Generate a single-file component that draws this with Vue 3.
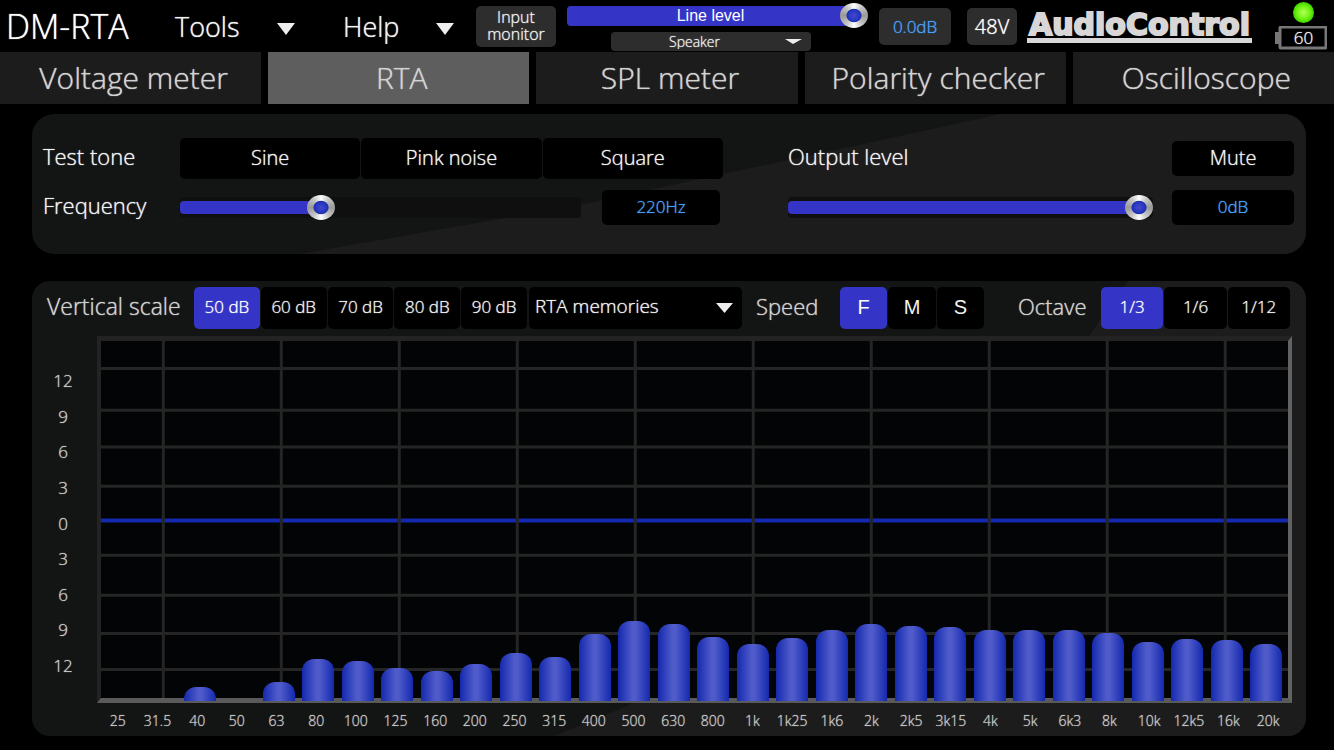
<script setup>
import { ref } from 'vue'

const tabs = ['Voltage meter', 'RTA', 'SPL meter', 'Polarity checker', 'Oscilloscope']
const activeTab = ref('RTA')

const tones = ['Sine', 'Pink noise', 'Square']
const tone = ref('')

const scales = ['50 dB', '60 dB', '70 dB', '80 dB', '90 dB']
const scale = ref('50 dB')
const speeds = ['F', 'M', 'S']
const speed = ref('F')
const octaves = ['1/3', '1/6', '1/12']
const octave = ref('1/3')

const lineLevel = ref(100)
const frequency = ref(34)
const outputLevel = ref(100)

const axis = [12, 9, 6, 3, 0, 3, 6, 9, 12]

// Grid positions as a share of the plot area
const rows = [7.7, 19.4, 29.7, 40.7, 60, 71.2, 81.9, 92]
const columns = Array.from({ length: 10 }, (_, i) => 5.25 + i * 9.94)

// [band, level] with level as a share of the plot height
const bands = [
  ['25', 0], ['31.5', 0], ['40', 3.8], ['50', 0], ['63', 5.4], ['80', 11.8],
  ['100', 11], ['125', 9.3], ['160', 8.2], ['200', 10.3], ['250', 13.4], ['315', 12.2],
  ['400', 18.6], ['500', 22.1], ['630', 21.5], ['800', 17.9], ['1k', 15.7], ['1k25', 17.4],
  ['1k6', 19.7], ['2k', 21.4], ['2k5', 20.9], ['3k15', 20.6], ['4k', 19.7], ['5k', 19.7],
  ['6k3', 19.7], ['8k', 19], ['10k', 16.5], ['12k5', 17.3], ['16k', 16.9], ['20k', 15.7]
]
</script>

<template>
  <div class="app">
    <header class="topbar">
      <h1 class="title">DM-RTA</h1>
      <button class="menu tools" type="button">
        Tools
        <svg width="18" height="14" viewBox="0 0 18 14"><path d="M0 1H18L9 13Z" /></svg>
      </button>
      <button class="menu help" type="button">
        Help
        <svg width="18" height="14" viewBox="0 0 18 14"><path d="M0 1H18L9 13Z" /></svg>
      </button>
      <button class="chip monitor" type="button">Input<br />monitor</button>
      <div class="line">
        <div class="line-slider">
          <input id="line" v-model="lineLevel" class="slider solid" type="range" :style="{ '--p': lineLevel / 100 }" />
          <label for="line">Line level</label>
        </div>
        <div class="picker speaker">
          <select aria-label="Source"><option>Speaker</option></select>
          <svg width="17" height="6" viewBox="0 0 17 6"><path d="M0 0H17L8 5Z" /></svg>
        </div>
      </div>
      <output class="chip gain">0.0dB</output>
      <button class="chip phantom" type="button">48V</button>
      <span class="logo">AudioControl</span>
      <div class="status">
        <span class="led"></span>
        <div class="battery">
          <svg width="52" height="24" viewBox="0 0 52 24">
            <path d="M0 6H5V18H0Z" fill="#777" />
            <rect x="5" y="1" width="46" height="21" rx="1" fill="#000" stroke="#777" stroke-width="3" />
          </svg>
          <span>60</span>
        </div>
      </div>
    </header>

    <nav class="tabs">
      <button v-for="t in tabs" :key="t" type="button" :class="{ on: t === activeTab }" @click="activeTab = t">{{ t }}</button>
    </nav>

    <section class="panel signal">
      <div class="block generator">
        <span class="label">Test tone</span>
        <div class="tones">
          <button v-for="t in tones" :key="t" class="key" type="button" :aria-pressed="t === tone" @click="tone = t">{{ t }}</button>
        </div>
        <label class="label" for="freq">Frequency</label>
        <div class="pair">
          <input id="freq" v-model="frequency" class="slider" type="range" :style="{ '--p': frequency / 100 }" />
          <output class="key value" for="freq">220Hz</output>
        </div>
      </div>
      <div class="block level">
        <label class="label" for="out">Output level</label>
        <button class="key" type="button">Mute</button>
        <input id="out" v-model="outputLevel" class="slider" type="range" :style="{ '--p': outputLevel / 100 }" />
        <output class="key value" for="out">0dB</output>
      </div>
    </section>

    <section class="panel analyser">
      <div class="toolbar">
        <span class="caption scale-caption">Vertical scale</span>
        <div class="group scales">
          <button v-for="s in scales" :key="s" class="key" :class="{ on: s === scale }" type="button" @click="scale = s">{{ s }}</button>
        </div>
        <div class="picker memories">
          <select aria-label="Memories"><option>RTA memories</option></select>
          <svg width="17" height="12" viewBox="0 0 17 12"><path d="M0 1H17L8.500 11Z" /></svg>
        </div>
        <span class="caption speed-caption">Speed</span>
        <div class="group speeds">
          <button v-for="s in speeds" :key="s" class="key" :class="{ on: s === speed }" type="button" @click="speed = s">{{ s }}</button>
        </div>
        <span class="caption octave-caption">Octave</span>
        <div class="group octaves">
          <button v-for="o in octaves" :key="o" class="key" :class="{ on: o === octave }" type="button" @click="octave = o">{{ o }}</button>
        </div>
      </div>

      <div class="chart">
        <div class="y-axis">
          <span v-for="(n, i) in axis" :key="i">{{ n }}</span>
        </div>
        <div class="plot">
          <svg class="grid" width="100%" height="100%">
            <line v-for="y in rows" :key="'r' + y" x1="0" x2="100%" :y1="y + '%'" :y2="y + '%'" />
            <line class="zero" x1="0" x2="100%" y1="50.3%" y2="50.3%" />
            <line v-for="x in columns" :key="'c' + x" :x1="x + '%'" :x2="x + '%'" y1="0" y2="100%" />
          </svg>
          <div class="bars">
            <div v-for="b in bands" :key="b[0]" class="slot">
              <div v-if="b[1]" class="bar" :style="{ height: b[1] + '%' }"></div>
            </div>
          </div>
        </div>
        <div class="x-axis">
          <span v-for="b in bands" :key="b[0]">{{ b[0] }}</span>
        </div>
      </div>
    </section>
  </div>
</template>

<style>
body {
  margin: 0;
  background: #000;
}
</style>

<style scoped>
.app {
  min-height: 100vh;
  box-sizing: border-box;
  display: flex;
  flex-direction: column;
  padding-bottom: 14px;
  background: #000;
  color: #f2f2f2;
  font-family: "Open Sans", "Noto Sans", sans-serif;
  font-weight: 300;
  text-shadow: 0 0 1px currentColor;
}
button,
select {
  margin: 0;
  padding: 0;
  border: 0;
  font: inherit;
  color: inherit;
  text-shadow: 0 0 1px currentColor;
  background: none;
  cursor: pointer;
}
svg {
  display: block;
  fill: #eee;
}

.topbar {
  height: 52px;
  display: flex;
  align-items: center;
  padding: 0 7px 0 6px;
  white-space: nowrap;
}
.title {
  margin: 0;
  width: 125px;
  font-size: 34px;
  font-weight: 300;
  color: #fff;
}
.menu {
  display: flex;
  align-items: center;
  justify-content: space-between;
  font-size: 27px;
  line-height: 40px;
  padding-top: 2px;
}
.menu svg {
  margin-top: 4px;
}
.tools {
  width: 120px;
  margin-left: 44px;
}
.help {
  width: 111px;
  margin-left: 48px;
}
.chip {
  display: flex;
  align-items: center;
  justify-content: center;
  border-radius: 5px;
  background: #2d2d2d;
}
.monitor {
  width: 80px;
  height: 41px;
  margin-left: 22px;
  font-size: 16px;
  line-height: 17px;
}
.line {
  flex: 1;
  min-width: 200px;
  height: 48px;
  margin-left: 11px;
  display: flex;
  flex-direction: column;
  align-items: center;
}
.line-slider {
  position: relative;
  width: 100%;
  display: flex;
}
.line-slider label {
  position: absolute;
  inset: 0 14px 0 0;
  text-align: center;
  line-height: 28px;
  font-family: "Liberation Sans", sans-serif;
  font-size: 16px;
  font-weight: 400;
  color: #fff;
  text-shadow: none;
  pointer-events: none;
}
.picker {
  position: relative;
}
.picker select {
  width: 100%;
  height: 100%;
  appearance: none;
}
.picker option {
  background: #000;
}
.picker svg {
  position: absolute;
  right: 9px;
  top: 50%;
  transform: translateY(-50%);
  pointer-events: none;
}
.speaker {
  width: 200px;
  height: 19px;
  margin: 3px 14px 0 0;
  border-radius: 4px;
  background: #2d2d2d;
  font-size: 14px;
}
.speaker select {
  padding-right: 32px;
  text-align-last: center;
  line-height: 17px;
  padding-bottom: 3px;
}
.gain {
  width: 72px;
  height: 37px;
  margin-left: 11px;
  font-size: 17px;
  color: #4aa3ff;
}
.phantom {
  width: 50px;
  height: 37px;
  margin-left: 16px;
  font-size: 20px;
  color: #fff;
}
.logo {
  width: 225px;
  margin: 2px 0 0 10px;
  border-bottom: 5px solid #d8d6d6;
  font-family: "DejaVu Sans", sans-serif;
  font-size: 30px;
  font-weight: 700;
  line-height: 26px;
  text-align: center;
  color: #d8d6d6;
  text-shadow: none;
  -webkit-text-stroke: 2px #d8d6d6;
}
.status {
  width: 52px;
  margin-left: 23px;
  display: flex;
  flex-direction: column;
  align-items: center;
  gap: 3px;
}
.led {
  width: 21px;
  height: 21px;
  margin-left: 4px;
  border-radius: 50%;
  background: radial-gradient(circle, #b4ff5e 0, #6cf20c 45%, #3fd400 70%, #1c7000 100%);
}
.battery {
  position: relative;
}
.battery span {
  position: absolute;
  inset: 0 0 0 5px;
  text-align: center;
  font-size: 17px;
  line-height: 24px;
}

.tabs {
  display: grid;
  grid-template-columns: repeat(5, 1fr);
  gap: 7px;
}
.tabs button {
  height: 52px;
  padding-left: 6px;
  font-size: 30px;
  line-height: 40px;
  background: #1c1c1c;
  color: #d2d2d2;
  white-space: nowrap;
}
.tabs .on {
  background: #5e5e5e;
}

.panel {
  position: relative;
  isolation: isolate;
  overflow: hidden;
  margin: 0 28px 0 32px;
  border-radius: 22px;
  background: #131414;
}
.panel::before {
  content: "";
  position: absolute;
  inset: 0;
  z-index: -1;
  background: #1c1c1c;
}
.signal {
  margin-top: 10px;
  padding: 24px 12px 29px 11px;
  display: grid;
  grid-template-columns: 680fr 506fr;
  gap: 65px;
}
.signal::before {
  clip-path: polygon(21% 100%, 43% 65%, 68% 16%, 76% 0, 100% 0, 100% 100%);
}
.block {
  display: grid;
  grid-template-rows: 41px 35px;
  row-gap: 11px;
  align-items: center;
}
.generator {
  grid-template-columns: 137px 1fr;
}
.level {
  grid-template-columns: 1fr 122px;
  column-gap: 19px;
}
.label {
  padding-bottom: 5px;
  font-size: 22px;
  line-height: 28px;
  white-space: nowrap;
}
.key {
  display: flex;
  align-items: center;
  justify-content: center;
  box-sizing: border-box;
  height: 35px;
  padding-bottom: 2px;
  border-radius: 5px;
  background: #000;
  font-size: 20px;
  white-space: nowrap;
}
.tones {
  display: grid;
  grid-template-columns: repeat(3, 1fr);
  gap: 1px;
}
.tones .key {
  height: 41px;
}
.pair {
  display: flex;
  align-items: center;
  gap: 21px;
  padding-right: 3px;
}
.pair .value {
  width: 118px;
}
.value {
  font-size: 17px;
  color: #4aa3ff;
}

.slider {
  --fill: calc(14px + (100% - 28px) * var(--p));
  appearance: none;
  flex: 1;
  width: 100%;
  min-width: 0;
  height: 27px;
  margin: 0;
  background: none;
}
.slider::-webkit-slider-runnable-track {
  height: 13px;
  border-radius: 4px;
  background: linear-gradient(#3434c6, #3434c6) 0 0 / var(--fill) 13px no-repeat #0f0f0f;
  box-shadow: 0 4px #0f0f0f, 0 -4px #0f0f0f;
}
.slider::-webkit-slider-thumb {
  appearance: none;
  width: 28px;
  height: 25px;
  margin-top: -6px;
  border-radius: 50%;
  background:
    radial-gradient(ellipse at center, #4747cc 0, #2236c0 6px, #1c2ea8 7px, transparent 8px),
    conic-gradient(#fff, #c4c4c4 12%, #9a9a9a 25%, #c4c4c4 38%, #fff 50%, #c4c4c4 62%, #9a9a9a 75%, #c4c4c4 88%, #fff);
}
.slider.solid::-webkit-slider-runnable-track {
  height: 20px;
  background: linear-gradient(#3434c6, #3434c6) 0 0 / var(--fill) 20px no-repeat;
  box-shadow: none;
}
.slider.solid::-webkit-slider-thumb {
  margin-top: -3px;
}

.analyser {
  flex: 1;
  display: flex;
  flex-direction: column;
  margin-top: 27px;
  border-radius: 18px;
}
.analyser::before {
  clip-path: polygon(41% 100%, 47% 93%, 83% 12%, 86% 0, 100% 0, 100% 100%);
}
.toolbar {
  display: flex;
  align-items: center;
  height: 55px;
  padding: 0 16px 2px 15px;
  box-sizing: border-box;
  white-space: nowrap;
}
.caption {
  padding-bottom: 4px;
  font-size: 22px;
  line-height: 30px;
  color: #d2d2d2;
}
.scale-caption {
  width: 147px;
  font-size: 23px;
}
.speed-caption {
  width: 84px;
  margin-left: 14px;
}
.octave-caption {
  width: 83px;
  margin-left: auto;
}
.group {
  display: flex;
  gap: 1px;
}
.group .key {
  flex: 1;
  height: 42px;
  font-size: 17px;
}
.group .on {
  background: #3434c6;
  color: #fff;
}
.scales {
  width: 333px;
}
.speeds {
  width: 144px;
}
.speeds .key {
  padding: 0;
  font-family: "Liberation Sans", sans-serif;
  font-size: 20px;
  font-weight: 400;
  text-shadow: none;
}
.octaves {
  width: 189px;
}
.memories {
  width: 213px;
  height: 42px;
  margin-left: 2px;
  border-radius: 5px;
  background: #000;
  font-size: 19px;
}
.memories select {
  padding: 0 0 3px 6px;
}

.chart {
  flex: 1;
  display: grid;
  grid-template-columns: 65px 1fr;
  grid-template-rows: 1fr 33px;
  padding-right: 14px;
  min-height: 300px;
}
.y-axis {
  display: flex;
  flex-direction: column;
  padding: 27px 3px 20px 0;
  font-size: 17px;
  color: #ccc;
}
.y-axis span {
  flex: 1;
  display: flex;
  align-items: center;
  justify-content: center;
}
.plot {
  position: relative;
  border: 4px solid;
  border-width: 5px 4px;
  border-color: #232323 #636363 #5a5a5a #232323;
  background: #030405;
}
.grid {
  position: absolute;
  inset: 0;
}
.grid line {
  stroke: #252525;
  stroke-width: 3px;
}
.grid .zero {
  stroke: #1429ae;
  stroke-width: 4px;
}
.bars {
  position: absolute;
  inset: 0 2px -3px 0;
  display: grid;
  grid-template-columns: repeat(30, 1fr);
}
.slot {
  display: flex;
  align-items: flex-end;
  justify-content: center;
}
.bar {
  width: 80%;
  border-radius: 12px 12px 0 0;
  background: linear-gradient(90deg, #1429ae, #4f5bca 45%, #4f5bca 55%, #1429ae);
}
.x-axis {
  grid-column: 2;
  display: grid;
  grid-template-columns: repeat(30, 1fr);
  padding: 2px 4px 0 1px;
  align-items: center;
  text-align: center;
  font-size: 14px;
  color: #ccc;
}
.x-axis span {
  min-width: 0;
}
</style>
